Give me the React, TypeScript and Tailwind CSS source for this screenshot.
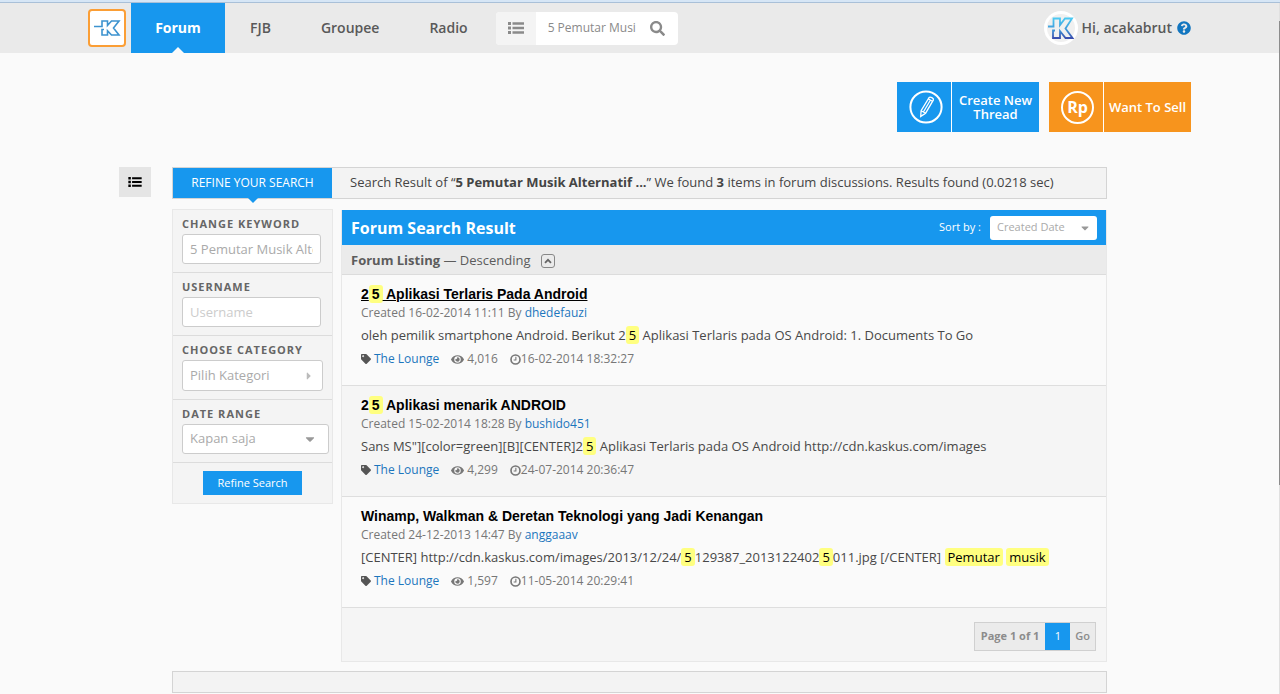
import { Fragment, type ReactNode } from "react";
import { FaCaretDown, FaCaretRight, FaEye, FaQuestionCircle, FaSearch, FaTag } from "react-icons/fa";

type Thread = {
  title: string;
  created: string;
  author: string;
  excerpt: string;
  views: string;
  updated: string;
  active?: boolean;
};

// Words wrapped in {} are search hits.
const threads: Thread[] = [
  {
    title: "2{5} Aplikasi Terlaris Pada Android",
    created: "16-02-2014 11:11",
    author: "dhedefauzi",
    excerpt:
      "oleh pemilik smartphone Android. Berikut 2{5} Aplikasi Terlaris pada OS Android: 1. Documents To Go",
    views: "4,016",
    updated: "16-02-2014 18:32:27",
    active: true,
  },
  {
    title: "2{5} Aplikasi menarik ANDROID",
    created: "15-02-2014 18:28",
    author: "bushido451",
    excerpt:
      'Sans MS"][color=green][B][CENTER]2{5} Aplikasi Terlaris pada OS Android http://cdn.kaskus.com/images',
    views: "4,299",
    updated: "24-07-2014 20:36:47",
  },
  {
    title: "Winamp, Walkman & Deretan Teknologi yang Jadi Kenangan",
    created: "24-12-2013 14:47",
    author: "anggaaav",
    excerpt:
      "[CENTER] http://cdn.kaskus.com/images/2013/12/24/{5}129387_2013122402{5}011.jpg [/CENTER] {Pemutar} {musik}",
    views: "1,597",
    updated: "11-05-2014 20:29:41",
  },
];

function Highlight({ text }: { text: string }) {
  return (
    <>
      {text.split(/[{}]/).map((part, i) =>
        i % 2 ? (
          <mark key={i} className="inline-block rounded-[3px] bg-[#ffff80] px-[3px] leading-[18px] text-black">
            {part}
          </mark>
        ) : (
          <Fragment key={i}>{part}</Fragment>
        ),
      )}
    </>
  );
}

function ListIcon({ className }: { className: string }) {
  return (
    <svg viewBox="0 0 16 12" className={className} fill="currentColor" aria-hidden="true">
      <path d="M0 0h3v3H0zM0 4.5h3v3H0zM0 9h3v3H0zM4.5.2H16v2.6H4.5zM4.5 4.7H16v2.6H4.5zM4.5 9.2H16v2.6H4.5z" />
    </svg>
  );
}

function ClockIcon({ className }: { className: string }) {
  return (
    <svg viewBox="0 0 12 12" className={className} fill="none" stroke="currentColor" aria-hidden="true">
      <circle cx="6" cy="6" r="4.9" strokeWidth="1.8" />
      <path d="M6.4 3v3.6H4" strokeWidth="1.2" />
    </svg>
  );
}

function TopNav() {
  return (
    <header className="border-t-2 border-[#d6e6f6] bg-[#eaeaea]">
      <div className="border-t border-[#a9c0d8]">
        <div className="mx-auto flex h-[50px] max-w-[1104px] items-center pr-px text-sm font-semibold text-[#595959]">
          <a
            href="#"
            aria-label="Home"
            className="mr-[5px] flex size-[38px] items-center justify-center rounded border-2 border-[#fb9e35] bg-white"
          >
            <svg viewBox="0 0 28 18" className="h-[18px] w-7" fill="none" stroke="#3d93cf" strokeWidth="1.6" aria-hidden="true">
              <path d="M1 7.5H9V2H14.5V6.5L18.5 2H26L20.5 9L26 16H18.5L14.5 11.8V16H9V10.5H11" />
            </svg>
          </a>
          <nav className="flex h-full">
            <a
              href="#"
              className="relative flex w-[94px] items-center justify-center bg-[#1797ee] font-bold text-white"
            >
              Forum
              <span className="absolute bottom-0 border-x-[6px] border-b-[6px] border-x-transparent border-b-[#fafafa]" />
            </a>
            <a href="#" className="flex items-center px-[25px]">FJB</a>
            <a href="#" className="flex items-center px-[25px]">Groupee</a>
            <a href="#" className="flex items-center px-[25px]">Radio</a>
          </nav>
          <form className="ml-[3px] flex h-[33px] overflow-hidden rounded bg-white text-[#8a8a8a]">
            <button
              type="button"
              aria-label="Search options"
              className="flex w-10 items-center justify-center bg-[#f4f4f4]"
            >
              <ListIcon className="h-3 w-4" />
            </button>
            <input
              aria-label="Search"
              defaultValue="5 Pemutar Musi"
              className="ml-3 w-[90px] text-xs font-normal outline-none"
            />
            <button type="button" aria-label="Submit search" className="flex w-10 items-center justify-center">
              <FaSearch className="size-[15px]" />
            </button>
          </form>
          <div className="ml-auto flex items-center">
            <span className="mr-1 flex size-[34px] items-center justify-center rounded-full border-[3px] border-white bg-[#f0f0f0]">
              <svg viewBox="0 0 27 23" className="h-[23px] w-[27px] shrink-0" fill="none" aria-hidden="true">
                <defs>
                  <linearGradient id="k-fade" x1="0" y1="0" x2="0" y2="1">
                    <stop offset="0" stopColor="#4cc9f2" />
                    <stop offset="0.6" stopColor="#3f93d6" />
                    <stop offset="1" stopColor="#3a4fae" />
                  </linearGradient>
                </defs>
                <path
                  d="M1 9.5H6.5V1.5H13V8L18 1.5H25L18.5 11.5L25.5 21H18.5L13 14V21H6V13.5H8"
                  stroke="url(#k-fade)"
                  strokeWidth="1.8"
                />
              </svg>
            </span>
            Hi, acakabrut
            <FaQuestionCircle className="ml-[5px] size-[14px] text-[#1276c0]" />
          </div>
        </div>
      </div>
    </header>
  );
}

function ActionButton({ icon, color, children }: { icon: ReactNode; color: string; children: ReactNode }) {
  return (
    <button
      type="button"
      className={`flex h-[50px] w-[142px] text-[13px] leading-[14px] font-semibold text-white ${color}`}
    >
      <span className="flex h-full w-[55px] items-center justify-center border-r border-white pl-[3px]">{icon}</span>
      <span className="flex h-full flex-1 items-center justify-center">{children}</span>
    </button>
  );
}

function Actions() {
  return (
    <div className="mx-auto mt-[29px] flex max-w-[1104px] justify-end gap-[10px] pr-px">
      <ActionButton
        color="bg-[#1797ee]"
        icon={
          <svg viewBox="0 0 34 34" className="size-[34px]" fill="none" stroke="#fff" aria-hidden="true">
            <circle cx="17" cy="17" r="15.6" strokeWidth="2" />
            <path
              d="M20.2 7.5c1-1.1 4.6.8 4.2 2.4L16.6 23.2l-4.9 3.2.4-5.7zM12.1 20.7l4.5 2.5M21.5 10L14.4 22M19 8.7l4.5 2.6"
              strokeWidth="1.3"
            />
          </svg>
        }
      >
        Create New
        <br />
        Thread
      </ActionButton>
      <ActionButton
        color="bg-[#f7941d]"
        icon={
          <span className="flex size-[33px] items-center justify-center rounded-full border-2 border-white text-base font-bold">
            Rp
          </span>
        }
      >
        Want To Sell
      </ActionButton>
    </div>
  );
}

const fieldClass = "block rounded-[3px] border border-[#ccc] bg-white px-[7px] text-[13px] text-[#aaa] outline-none";

function Field({ id, label, children }: { id: string; label: string; children: ReactNode }) {
  return (
    <div className="border-b border-[#dcdcdc] px-[9px] pt-[5px] pb-2">
      <label htmlFor={id} className="mb-px block text-[11px] leading-[18px] font-bold tracking-[1px] text-[#666]">
        {label}
      </label>
      {children}
    </div>
  );
}

function RefinePanel() {
  return (
    <form className="w-[161px] shrink-0 self-start border border-[#e8e8e8] bg-[#f4f4f4]">
      <Field id="keyword" label="CHANGE KEYWORD">
        <input id="keyword" defaultValue="5 Pemutar Musik Alternatif" className={`h-[30px] w-[139px] ${fieldClass}`} />
      </Field>
      <Field id="username" label="USERNAME">
        <input
          id="username"
          placeholder="Username"
          className={`h-[30px] w-[139px] placeholder:text-[#ccc] ${fieldClass}`}
        />
      </Field>
      <Field id="category" label="CHOOSE CATEGORY">
        <button id="category" type="button" className={`h-[31px] w-[141px] text-left ${fieldClass}`}>
          <span className="flex items-center justify-between">
            Pilih Kategori
            <FaCaretRight className="size-3 text-[#bbb]" />
          </span>
        </button>
      </Field>
      <Field id="range" label="DATE RANGE">
        <div className="relative w-[147px]">
          <select id="range" className={`h-[30px] w-full appearance-none ${fieldClass}`}>
            <option>Kapan saja</option>
          </select>
          <FaCaretDown className="pointer-events-none absolute top-2 right-3 size-[14px] text-[#999]" />
        </div>
      </Field>
      <div className="flex justify-center py-2">
        <button type="button" className="h-6 bg-[#1797ee] px-[14px] text-[11px] font-medium text-white">
          Refine Search
        </button>
      </div>
    </form>
  );
}

function ThreadItem({ thread }: { thread: Thread }) {
  return (
    <li className="border-b border-[#dedede] px-[19px] pt-[10px] pb-[17px] text-xs leading-[18px] text-[#777] odd:bg-[#fafafa] even:bg-[#f5f5f5]">
      <h3 className="font-['Liberation_Sans',Arial,sans-serif] text-sm leading-[18px] font-bold text-black">
        <a href="#" className={thread.active ? "underline" : ""}>
          <Highlight text={thread.title} />
        </a>
      </h3>
      <p className="leading-5">
        Created {thread.created} By <a href="#" className="text-[#1c76bd]">{thread.author}</a>
      </p>
      <p className="mt-[3px] text-[13px] leading-[18px] text-[#484848]">
        <Highlight text={thread.excerpt} />
      </p>
      <div className="mt-[6px] flex items-center">
        <FaTag className="mr-[3px] size-[10px] text-[#555]" />
        <a href="#" className="mr-3 text-[#1c76bd]">The Lounge</a>
        <FaEye className="mr-[3px] size-[13px]" />
        <span className="mr-3">{thread.views}</span>
        <ClockIcon className="size-[11px]" />
        {thread.updated}
      </div>
    </li>
  );
}

function Results() {
  return (
    <section className="mt-px min-w-0 flex-1 border-x border-b border-[#e8e8e8] bg-[#f5f5f5]">
      <div className="flex h-[35px] items-center bg-[#1797ee] px-[9px] text-white">
        <h2 className="text-base font-bold">Forum Search Result</h2>
        <label htmlFor="sort" className="mr-[9px] ml-auto text-[11px] font-medium">Sort by :</label>
        <div className="relative w-[107px]">
          <select
            id="sort"
            className="block h-6 w-full appearance-none rounded-[3px] bg-white px-[7px] text-[11px] text-[#aaa] outline-none"
          >
            <option>Created Date</option>
          </select>
          <FaCaretDown className="pointer-events-none absolute top-[6px] right-[6px] size-3 text-[#999]" />
        </div>
      </div>
      <div className="flex h-[30px] items-center border-b border-[#dcdcdc] bg-[#ebebeb] px-[9px] pt-[2px] text-[13px] text-[#5c5c5c]">
        <p>
          <strong>Forum Listing</strong> — Descending
        </p>
        <button
          type="button"
          aria-label="Toggle order"
          className="ml-[10px] flex size-[14px] items-center justify-center rounded-[3px] border border-[#888]"
        >
          <svg viewBox="0 0 8 6" className="h-[6px] w-2" fill="none" stroke="#666" strokeWidth="1.8" aria-hidden="true">
            <path d="M1 4.8L4 1.8L7 4.8" />
          </svg>
        </button>
      </div>
      <ul>
        {threads.map((thread) => (
          <ThreadItem key={thread.title} thread={thread} />
        ))}
      </ul>
      <div className="flex justify-end px-[10px] pt-[14px] pb-[10px]">
        <div className="flex h-[29px] items-center border border-[#d0d0d0] bg-[#ebebeb] text-[11px] text-[#8c8c8c]">
          <span className="px-[6px] font-bold">Page 1 of 1</span>
          <a href="#" className="flex h-full w-[25px] items-center justify-center bg-[#1797ee] text-white">1</a>
          <button type="button" className="px-[5px] font-semibold">Go</button>
        </div>
      </div>
    </section>
  );
}

export default function App() {
  return (
    <div className="relative min-h-screen bg-[#fafafa] font-['Open_Sans',sans-serif]">
      <TopNav />
      <Actions />
      <main className="mx-auto mt-[35px] flex max-w-[1042px] items-start pr-[54px]">
        <button
          type="button"
          aria-label="Forum list"
          className="mr-[21px] flex h-[30px] w-8 shrink-0 items-center justify-center bg-[#e5e5e5] text-black"
        >
          <ListIcon className="h-[10px] w-[14px]" />
        </button>
        <div className="min-w-0 flex-1">
          <div className="flex h-8 items-center border border-[#d4d4d4] bg-[#f3f3f3] text-[13px] text-[#444]">
            <h1 className="relative flex h-full w-[159px] items-center justify-center bg-[#1797ee] text-xs text-white">
              REFINE YOUR SEARCH
              <span className="absolute top-full border-x-[5px] border-t-[5px] border-x-transparent border-t-[#1797ee]" />
            </h1>
            <p className="ml-[18px]">
              Search Result of “<strong>5 Pemutar Musik Alternatif ...</strong>” We found <strong>3</strong> items in
              forum discussions. Results found (0.0218 sec)
            </p>
          </div>
          <div className="mt-[10px] flex gap-2">
            <RefinePanel />
            <Results />
          </div>
          <div className="mt-[9px] h-[22px] border border-[#d4d4d4] bg-[#f3f3f3]" />
        </div>
      </main>
      {/* slim scroll track along the window edge */}
      <div className="absolute top-[3px] right-0 bottom-0 w-px bg-[#e0e0e0] pt-[18px]">
        <div className="h-[69%] bg-[#8c8c8c]" />
      </div>
    </div>
  );
}
